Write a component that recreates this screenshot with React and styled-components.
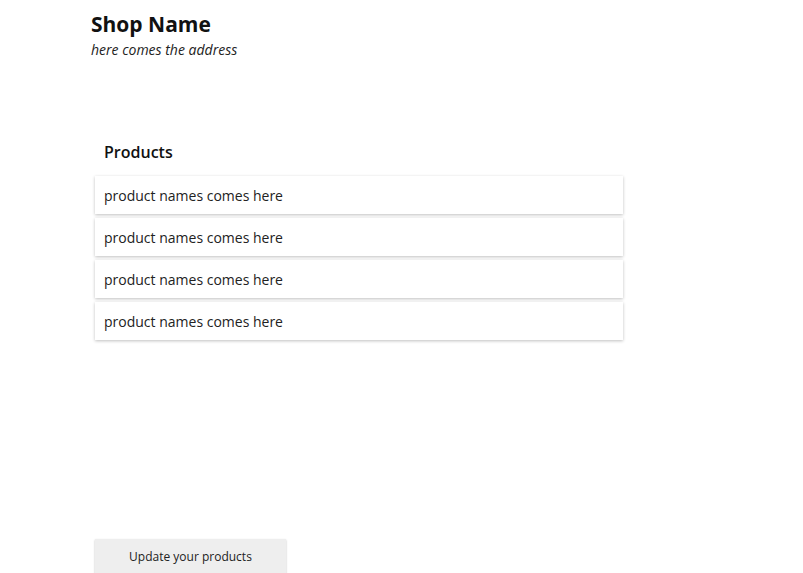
import styled, { createGlobalStyle } from 'styled-components';

const Global = createGlobalStyle`
  body {
    margin: 0;
    font-family: "Open Sans", "Noto Sans", sans-serif;
    color: #222;
    background: #fff;
  }
`;

const Page = styled.div`
  padding: 10px 0 0 91px;
  height: 573px;
  box-sizing: border-box;
  overflow: hidden;
`;

const ShopName = styled.h1`
  margin: 0;
  font-size: 21px;
  font-weight: 700;
  color: #111;
  line-height: 28px;
`;

const Address = styled.p`
  margin: 0;
  font-size: 14px;
  font-style: italic;
  line-height: 24px;
  color: #222;
`;

const Section = styled.div`
  margin: 78px 0 0 4px;
  width: 528px;
`;

const SectionTitle = styled.h2`
  margin: 0 0 12px 9px;
  font-size: 16px;
  font-weight: 600;
  line-height: 24px;
  color: #111;
`;

const List = styled.div`
  display: flex;
  flex-direction: column;
  gap: 4px;
`;

const Item = styled.div`
  height: 38px;
  display: flex;
  align-items: center;
  padding-left: 9px;
  font-size: 14px;
  color: #222;
  background: #fff;
  box-shadow: 0 1px 3px rgba(0, 0, 0, 0.25);
`;

const Button = styled.button`
  margin: 199px 0 0 4px;
  width: 191px;
  height: 35px;
  border: none;
  background: #eeeeee;
  box-shadow: 0 1px 2px rgba(0, 0, 0, 0.25);
  font-family: inherit;
  font-size: 12px;
  color: #222;
  cursor: pointer;
`;

export default function App() {
  const products = Array(4).fill('product names comes here');
  return (
    <>
      <Global />
      <Page>
        <ShopName>Shop Name</ShopName>
        <Address>here comes the address</Address>
        <Section>
          <SectionTitle>Products</SectionTitle>
          <List>
            {products.map((p, i) => (
              <Item key={i}>{p}</Item>
            ))}
          </List>
        </Section>
        <Button>Update your products</Button>
      </Page>
    </>
  );
}
